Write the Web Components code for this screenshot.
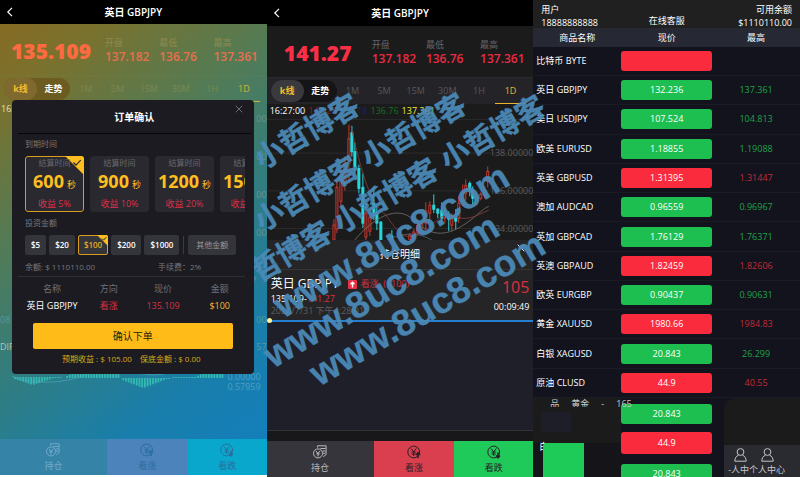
<!DOCTYPE html>
<html lang="zh-CN">
<head>
<meta charset="utf-8">
<title>英日 GBPJPY</title>
<style>
html,body{margin:0;background:#fff}
body{font-family:"Open Sans","Noto Sans CJK SC",sans-serif;font-size:9px;line-height:12px;color:#fff}
main{position:relative;display:grid;grid-template-columns:1fr 1fr 1fr;min-height:100vh;overflow:hidden}
.glow{
  --page:linear-gradient(142deg,#8a6920 0%,#78722f 16%,#537b55 36%,#337d7c 55%,#197eab 78%,#127fc0 100%);
  --big:#ff6a40;--value:#e96f4c;--label:#8f8a50;--muted:#7f8750;--pill:#80692e;--pill2:#6d5c20;--bar:transparent;
  --active:#d0b430;--edge:#7d8a5033;--headline:24px;
  --c1:#3683a8;--c2:#4b83ba;--c3:#0aa7cd;--navink:#73aaca;--navdark:#2b6e9f;
  margin-bottom:2px}
.dark{
  --page:#1b1b1c;--big:#fa2f46;--value:#e92b42;--label:#66666a;--muted:#56575c;--pill:#39393e;--pill2:#151518;--bar:#242428;
  --active:#eab52b;--edge:#29292d;--headline:26px;
  --c1:#35353b;--c2:#d93f4f;--c3:#1fca5b;--navink:#b9b9be;--navdark:#2b2025}
</style>
</head>
<body>
<main>
  <phone-screen class="glow">
    <app-header>英日 GBPJPY</app-header>
    <quote-bar price="135.109"></quote-bar>
    <period-tabs></period-tabs>
    <macd-chart></macd-chart>
    <trade-nav></trade-nav>
    <order-dialog slot="overlay"></order-dialog>
  </phone-screen>
  <phone-screen class="dark">
    <app-header>英日 GBPJPY</app-header>
    <quote-bar price="141.27"></quote-bar>
    <period-tabs></period-tabs>
    <candle-chart></candle-chart>
    <position-sheet></position-sheet>
    <trade-nav></trade-nav>
  </phone-screen>
  <market-screen></market-screen>
  <site-watermark></site-watermark>
</main>
<script>
const define = (name, html) => {
  const t = document.createElement('template');
  t.innerHTML = `<style>:host,*{box-sizing:border-box}button{font:inherit;color:inherit;background:none;border:0;padding:0;margin:0}</style>` + html;
  customElements.define(name, class extends HTMLElement {
    constructor(){
      super();
      this.attachShadow({mode:'open'}).append(t.content.cloneNode(true));
    }
    connectedCallback(){
      this.shadowRoot.querySelectorAll('[data-attr]').forEach(e => e.textContent = this.getAttribute(e.dataset.attr));
    }
  });
};

define('phone-screen', `<style>
:host{display:flex;flex-direction:column;position:relative;background:var(--page);min-width:0}
</style><slot></slot><slot name="overlay"></slot>`);

define('app-header', `<style>
:host{display:grid;grid-template-columns:20px 1fr 20px;align-items:center;height:var(--headline);background:#000}
h1{margin:0;font-size:10px;line-height:16px;font-weight:600;text-align:center}
button{display:grid;place-items:center;height:100%}
</style>
<button aria-label="返回"><svg width="8" height="10" viewBox="0 0 8 10" fill="none" stroke="#fff" stroke-width="1.2"><path d="M6 .8 1.8 5 6 9.2"/></svg></button>
<h1><slot></slot></h1>`);

define('quote-bar', `<style>
:host{display:grid;grid-template-columns:98px 1fr 1fr 1fr;align-items:center;flex:0 0 52px;padding:2px 4px 0 2px;border-bottom:1px solid var(--edge)}
strong{font-size:21px;line-height:28px;font-weight:800;color:var(--big);text-align:center}
dl{margin:0;padding-left:5px}
dt{color:var(--label);line-height:13px}
dd{margin:0;font-size:12px;line-height:16px;font-weight:600;color:var(--value)}
</style>
<strong data-attr="price"></strong>
<dl><dt>开盘</dt><dd>137.182</dd></dl><dl><dt>最低</dt><dd>136.76</dd></dl><dl><dt>最高</dt><dd>137.361</dd></dl>`);

define('period-tabs', `<style>
:host{display:flex;flex:0 0 26px;padding:0 7px 0 4px;background:var(--bar);color:var(--muted);align-items:stretch}
.mode{display:flex;align-self:center;background:var(--pill2);border-radius:12px;color:#fff;height:22px;font-weight:700}
.mode button{width:33px;border-radius:11px}
.mode .on{background:var(--pill);color:#f5be2c}
.periods{display:grid;grid-template-columns:repeat(6,1fr);flex:1}
.periods .on{color:var(--active);border-bottom:1px solid var(--active)}
</style>
<div class="mode"><button class="on">k线</button><button>走势</button></div>
<div class="periods"><button>1M</button><button>5M</button><button>15M</button><button>30M</button><button>1H</button><button class="on">1D</button></div>`);

const coin = (extra) => `<svg width="14" height="14" viewBox="0 0 14 14" fill="none" stroke="currentColor" stroke-width="1"><circle cx="6.7" cy="7" r="5.9"/><path d="m4 3.5 2.7 3.3 2.6-3.3M6.7 6.8v4M4.6 7h4.2M4.6 9h4.2"/>${extra}</svg>`;
define('trade-nav', `<style>
:host{display:grid;grid-template-columns:107fr 81fr 79fr;flex:0 0 36px;color:var(--navink)}
button{display:flex;flex-direction:column;align-items:center;justify-content:center;line-height:13px;gap:2px;background:var(--c1)}
.up{background:var(--c2);color:var(--navdark)}.down{background:var(--c3);color:var(--navdark)}
</style>
<button><svg width="14" height="14" viewBox="0 0 14 14" fill="none" stroke="currentColor"><circle cx="5" cy="8.4" r="4.5"/><path d="m3 6 2 2.4L7 6M5 8.4v3M3.3 8.8h3.4M4.5 2.5V.8h8.6v8.7l-2.8 2.3M7.5 3.5h5M9.5 6h3M10 8.3h2"/></svg>持仓</button>
<button class="up">${coin('<path d="M11 13V8M9 10l2-2.2 2 2.2" stroke-width="1.6"/>')}看涨</button>
<button class="down">${coin('<path d="M11 7.5v5M9 10.5l2 2.2 2-2.2" stroke-width="1.6"/>')}看跌</button>`);

const bars = (() => {
  let s = '';
  const put = (x, y, h) => s += `<rect x="${x}" y="${y}" width="1.8" height="${h}"/>`;
  for (let x = 14; x < 60; x += 2.7) put(x, 6, Math.max(1, 8 - Math.abs(x - 32) / 3));
  for (let x = 66; x < 118; x += 2.7) { const h = Math.min(14, 2 + (x - 66) / 2); put(x, 7 - h, h); }
  for (let x = 122; x < 168; x += 2.7) put(x, 7, Math.max(1, 10 - Math.abs(x - 142) / 2.6));
  for (let x = 172; x < 194; x += 2.7) put(x, 6, 1);
  for (let x = 194; x < 221; x += 2.7) { const h = Math.min(13, 1 + (x - 194) / 2); put(x, 7 - h, h); }
  return s;
})();
define('macd-chart', `<style>
:host{display:flex;flex-direction:column;flex:1;color:#6b938b;overflow:hidden}
.top{display:flex;color:#e4e0bd;padding:1px 0 0 1px}
.axis{display:flex;flex-direction:column;align-items:flex-end;gap:26px;margin-top:-2px}
.low{display:flex;justify-content:space-between;color:#5797a2;margin-bottom:15px}
.dif{color:#a6c8bd}
.spacer{flex:1}
.low.last{margin-bottom:10px}
.wave{display:grid;grid-template-columns:1fr;margin-bottom:46px}
.wave svg{grid-area:1/1;width:100%;height:30px}
.num{grid-area:1/1;justify-self:end;display:flex;flex-direction:column;padding:9px 6px 0 0;line-height:10px;color:#4ca0c4}
</style>
<div class="top">16:</div>
<div class="axis"><span>00</span><span>00</span><span>00</span><span>00</span></div>
<div class="spacer"></div>
<div class="low"><span>08</span><span>00</span></div>
<div class="low last"><span class="dif">DIF</span><span>57</span></div>
<div class="wave"><svg viewBox="0 -8 266 30" preserveAspectRatio="none"><g fill="#32b9b0">${bars}</g><g fill="none" stroke="#4aa6bd" stroke-width=".7"><path d="M12 5c20 9 50 7 67 1 20-7 40-10 60-4 15 4 28 1 35-3"/></g></svg><div class="num"><span>0.00000</span><span>0.57959</span></div></div>`);

define('order-dialog', `<style>
:host{position:absolute;z-index:2;left:12px;right:13px;top:100px;display:block;background:#1b1b21;border-radius:4px;padding:0 9px 9px 6px}
header{display:grid;grid-template-columns:24px 1fr 24px;align-items:center;height:34px;margin-right:-6px;border-bottom:1px solid #08080b}
h2{grid-column:2;margin:0;font-size:10px;font-weight:600;text-align:center;line-height:16px}
.close{display:grid;place-items:center;align-self:start;height:18px}
h3{margin:0;padding-left:7px;font-size:8px;line-height:12px;font-weight:400;color:#77777b}
header + h3{padding-top:4px}
.terms{display:flex;gap:6px;margin:6px 0 5px 7px;overflow:hidden;color:#ffbe1f}
.terms button{position:relative;flex:0 0 59px;height:56px;background:#29292f;border:1px solid #29292f;border-radius:3px;display:flex;flex-direction:column;align-items:center;justify-content:center}
.terms small{position:relative;font-size:8px;line-height:12px;color:#68686d}
.terms b{font-size:18px;line-height:24px;font-weight:700;white-space:nowrap}
.terms i{font-style:normal;font-size:9px;font-weight:400;margin-left:3px}
.terms em{font-style:normal;font-size:9px;line-height:14px;color:#dd304a}
.terms .on,.sums .on{border-color:#d99c20}
.tick{position:absolute;right:-1px;top:-1px}
.sums{display:flex;margin:6px 0 0 7px;gap:3px;align-items:center;font-size:8px;font-weight:600}
.sums button{position:relative;height:20px;padding:0 5px;background:#34343b;border:1px solid #34343b;border-radius:2px}
.sums .on{color:#e5aa25}
.sums span{width:1px;height:18px;background:#3b3b42;margin:0 1px}
.sums .other{color:#97979c;font-weight:400;padding:0 7px}
.info{display:grid;grid-template-columns:133px 1fr;padding:6px 0 3px 7px;color:#77777b;line-height:12px;border-bottom:1px solid #2e2e34;font-size:8px}
table{width:100%;border-collapse:collapse;table-layout:fixed;text-align:center;margin-top:3px}
th,td{padding:0;height:17px;font-weight:400;white-space:nowrap}
th{color:#707074}
.red{color:#d93045}.gold{color:#f4bd32}
.submit{display:block;width:calc(100% - 27px);height:26px;margin:9px auto 0 15px;border-radius:2px;background:#ffbb17;color:#2c260f;font-size:10px}
p{margin:4px 0 0;text-align:center;color:#dba91a;font-size:8px;line-height:12px}
p span+span{margin-left:8px}
</style>
<header><h2>订单确认</h2><button class="close" aria-label="关闭"><svg width="8" height="8" viewBox="0 0 8 8" stroke="#77777b" stroke-width=".9"><path d="m.7.7 6.6 6.6M7.3.7.7 7.3"/></svg></button></header>
<h3>到期时间</h3>
<div class="terms">
<button class="on"><svg class="tick" width="19" height="19" viewBox="0 0 19 19"><path d="M0 0h16q3 0 3 3v16z" fill="#ffbe1f"/><path d="m8.5 6.5 2.5 2.7 4.7-5" fill="none" stroke="#29292f" stroke-width="1.2"/></svg><small>结算时间</small><b>600<i>秒</i></b><em>收益 5%</em></button>
<button><small>结算时间</small><b>900<i>秒</i></b><em>收益 10%</em></button>
<button><small>结算时间</small><b>1200<i>秒</i></b><em>收益 20%</em></button>
<button><small>结算时间</small><b>1500<i>秒</i></b><em>收益 30%</em></button>
</div>
<h3>投资金额</h3>
<div class="sums"><button>$5</button><button>$20</button><button class="on">$100<svg class="tick" width="11" height="11" viewBox="0 0 11 11"><path d="M0 0h9q2 0 2 2v9z" fill="#ffbe1f"/><path d="m5 3.5 1.5 1.7 2.8-3" fill="none" stroke="#29292f"/></svg></button><button>$200</button><button>$1000</button><span></span><button class="other">其他金额</button></div>
<div class="info"><span>余额: $ 1110110.00</span><span>手续费：2%</span></div>
<table><colgroup><col style="width:30%"><col style="width:20%"><col style="width:28%"><col style="width:22%"></colgroup>
<tr><th>名称</th><th>方向</th><th>现价</th><th>金额</th></tr>
<tr><td>英日 GBPJPY</td><td class="red">看涨</td><td class="red">135.109</td><td class="gold">$100</td></tr></table>
<button class="submit">确认下单</button>
<p><span>预期收益 : $ 105.00</span><span>保底金额 : $ 0.00</span></p>`);

/* x, wick top, wick bottom, body top, body bottom, rising */
const candles = [[67,116,137,122,137,1],[70,78,130,84,126,1],[74,66,103,74,98,1],[78,53,87,60,80,1],[82,21,80,35,60,1],
[85,22,53,29,48,0],[88,39,70,48,63,0],[92,61,90,65,85,0],[96,70,125,84,120,0],[99,103,137,110,134,1],[103,110,133,114,128,1],
[107,83,117,100,112,0],[110,103,127,110,120,0],[114,118,137,119,137,0],[125,127,137,133,137,0],[143,130,137,132,137,1],[147,126,137,129,135,1],
[151,116,133,122,130,1],[155,118,127,120,125,1],[159,99,127,108,120,1],[163,98,117,102,110,1],[167,91,110,102,106,0],[171,105,115,106,110,0],
[175,99,121,107,115,0],[178,105,120,110,115,1],[182,108,128,111,116,0],[185,110,128,113,122,1],[189,106,126,114,118,0],[192,93,120,100,115,1],
[196,81,103,89,98,1],[199,76,97,82,90,1],[203,78,93,80,87,0],[206,83,101,87,95,0],[210,90,102,93,98,1],[214,89,97,91,95,1],[218,83,95,87,92,1],[221,63,84,68,78,1]];
const candleSvg = candles.map(([x,a,b,c,d,r]) => `<g ${r ? 'stroke="#c8382f" fill="#1b1b1c"' : 'stroke="#28d8dc" fill="#28d8dc"'}><path d="M${x} ${a}V${b}"/><rect x="${x-1}" y="${c}" width="2" height="${d-c}"/></g>`).join('');
define('candle-chart', `<style>
:host{display:grid;flex:0 0 136px;overflow:hidden}
svg,.over{grid-area:1/1;width:100%;height:100%}
.over{display:grid;grid-template-rows:17px 1fr;color:#fff}
.legend{display:flex;gap:3px;padding:1px 3px;line-height:12px}
.axis{display:flex;flex-direction:column;align-items:flex-end;gap:26px;color:#5c5c5f;padding-top:26px}
</style>
<svg viewBox="0 0 267 137" preserveAspectRatio="none"><g stroke="#2b2b2d"><path d="M0 15.5h267M0 49.5h267M0 87.5h267M0 125.5h267"/></g>
<g stroke-width="1">${candleSvg}</g>
<g fill="none" stroke-width=".8"><path d="M88 137C105 116 130 100 147 117c18 18 33 15 48 6 12-7 20-17 27-20" stroke="#77706c"/><path d="M84 22c9 40 18 75 31 86 10 9 17 29 31 25 22-7 25-25 40-20s20 1 36-6" stroke="#873e38"/><path d="M120 137c20-8 30-8 45 0" stroke="#566579"/></g></svg>
<div class="over"><div class="legend"><span>16:27:00</span><span style="color:#8c1d25">141.27</span><span style="color:#1b1f74">137.18</span><span style="color:#167022">136.76</span><span style="color:#f1f13a">137.361</span></div>
<div class="axis"><span>138.00000</span><span>136.00000</span><span>134.00000</span></div></div>`);

define('position-sheet', `<style>
:host{display:flex;flex-direction:column;flex:1;background:#1e1f28}
.card{background:#252527}
header{display:grid;grid-template-columns:24px 1fr 24px;height:30px;border-bottom:1px solid #343436}
h2{grid-column:2;margin:0;font-size:10px;line-height:28px;font-weight:400;text-align:center}
header button{align-self:start;height:16px;display:grid;place-items:center}
.item{display:flex;justify-content:space-between;padding:5px 4px 2px;height:50px}
.name{display:flex;align-items:center;gap:9px;line-height:18px;font-size:12px}
.side{display:flex;align-items:center;gap:4px;color:#cf3043;font-size:9px}
.left{line-height:12px}
.muted{color:#5d5d60}.red{color:#dc2e43}
.right{text-align:right}
.right b{display:block;font-size:16px;line-height:24px;font-weight:400;color:#dc2e43;margin-bottom:2px}
progress{display:block;appearance:none;width:100%;height:2px;border:0;background:#277fd0}
progress::-webkit-progress-bar{background:#277fd0}
.track{position:relative}
.track i{position:absolute;left:0;top:-2px;width:5px;height:5px;border-radius:50%;background:#fbf49b}
.fill{flex:1;border-bottom:1px solid #333338}
.foot{height:10px;background:#18181a}
</style>
<div class="card"><header><h2>持仓明细</h2><button aria-label="关闭"><svg width="8" height="8" viewBox="0 0 8 8" stroke="#fff" stroke-width=".9"><path d="m.7.7 6.6 6.6M7.3.7.7 7.3"/></svg></button></header>
<div class="item"><div class="left"><div class="name">英日 GBPJPY<span class="side"><svg width="9" height="9" viewBox="0 0 9 9"><rect width="9" height="9" rx="1" fill="#e92f46"/><path d="M4.5 7.5v-5M2.5 4.3l2-2 2 2" fill="none" stroke="#fff" stroke-width="1.4"/></svg>看涨&nbsp; ($100)</span></div>
<div>135.109-<span class="red">141.27</span></div><div class="muted">2020/7/31 下午4:28:01</div></div>
<div class="right"><b>105</b><span>00:09:49</span></div></div></div>
<div class="track"><progress value="0" max="1" aria-label="持仓进度"></progress><i></i></div>
<div class="fill"></div><div class="foot"></div>`);

const quotes = [['比特币 BYTE','','','r'],['英日 GBPJPY','132.236','137.361','g'],['美日 USDJPY','107.524','104.813','g'],['欧美 EURUSD','1.18855','1.19088','g'],
['英美 GBPUSD','1.31395','1.31447','r'],['澳加 AUDCAD','0.96559','0.96967','g'],['英加 GBPCAD','1.76129','1.76371','g'],['英澳 GBPAUD','1.82459','1.82606','r'],
['欧英 EURGBP','0.90437','0.90631','g'],['黄金 XAUUSD','1980.66','1984.83','r'],['白银 XAGUSD','20.843','26.299','g'],['原油 CLUSD','44.9','40.55','r']];
const person = `<svg width="13" height="14" viewBox="0 0 13 14" fill="none" stroke="#c4c4c9" stroke-width="1"><circle cx="6.5" cy="4" r="3.4"/><path d="M4.4 7.2C2 8.2 1 10 .8 13.2h11.4C12 10 11 8.2 8.6 7.2"/></svg>`;
define('market-screen', `<style>
:host{display:grid;grid-template-rows:28px 1fr 79px;background:#12131c;min-width:0;overflow:hidden}
header{display:grid;grid-template-columns:1fr auto 1fr;background:#202021;padding:3px 8px 0;line-height:13px}
header p{margin:0}
header a{color:inherit;text-decoration:none;align-self:end;line-height:15px;padding-bottom:1px}
header .bal{text-align:right}
table{width:100%;height:100%;border-collapse:collapse;table-layout:fixed;font-size:9px}
th{height:19px;padding:0;background:#262833;font-weight:400}
td{padding:0;text-align:center;border-bottom:1px solid #1a1b24;line-height:12px}
td:first-child{text-align:left;padding-left:3px}
.price{display:block;width:100%;height:20px;border-radius:3px;color:#fff}
.g .price,.price.g{background:#1dbf50}.r .price,.price.r{background:#f92b3c}
.g .hi{color:#20a34a}.r .hi{color:#c02b3a}
.tail{position:relative;display:grid;grid-template-columns:1fr 91px 1fr;overflow:hidden}
.stack{display:grid;grid-template-rows:20px 24px 20px;row-gap:8px;padding-top:6px}
.stack .mid{height:22px}
.left{position:relative;background:linear-gradient(#1b1b1c 0 45px,#151519 45px)}
.left .ghost{position:absolute;left:8px;top:14px;width:30px;height:20px;background:#1d1e28}
.left .green{position:absolute;left:10px;top:45px;width:41px;height:34px;background:#1ecb58;border-radius:3px 0 0 0}
.left .char{position:absolute;left:6px;top:43px}
.strip{position:absolute;left:17px;top:0;height:9px;overflow:hidden;display:flex;gap:12px;line-height:11px;color:#ccccca}
.user{background:#1b1b1c;margin-left:12px;border-radius:12px 0 0 0;overflow:hidden}
.user nav{margin-top:47px;height:32px;background:#2a2a31;display:grid;align-content:start;justify-items:start;padding-top:3px}
.user .icons{display:flex;gap:14px;padding-left:10px;height:15px}
.user nav span{white-space:nowrap;line-height:13px;color:#c8c8cc;padding-left:4px}
.user nav a{color:inherit;text-decoration:none}
</style>
<header><p>用户<br>18888888888</p><a href="#service">在线客服</a><p class="bal">可用余额<br>$1110110.00</p></header>
<table><colgroup><col><col style="width:91px"><col></colgroup><thead><tr><th>商品名称</th><th>现价</th><th>最高</th></tr></thead><tbody>
${quotes.map(([n,p,h,c]) => `<tr class="${c}"><td>${n}</td><td><button class="price" aria-label="${n} 现价">${p}</button></td><td class="hi">${h}</td></tr>`).join('')}
</tbody></table>
<div class="tail"><div class="left"><i class="ghost"></i><span class="char">白</span><i class="green"></i></div>
<div class="stack"><button class="price g">20.843</button><button class="price r mid">44.9</button><button class="price g">20.843</button></div>
<div class="user"><nav><div class="icons">${person}${person}</div><span><a href="#me">-人中</a><a href="#me">个人中心</a></span></nav></div>
<div class="strip"><span>品</span><span>黄金</span><span>-</span><span>165</span></div></div>`);

define('site-watermark', `<style>
:host{position:absolute;inset:0;z-index:1;pointer-events:none}
svg{display:block;width:100%;height:100%}
text{fill:#4b8ab8;stroke:#4b8ab8;stroke-width:.5;font-weight:700;font-size:29px;font-family:"Liberation Sans","Noto Sans CJK SC",sans-serif;opacity:.94}
.url{font-size:37px;stroke-width:.3}
</style>
<svg viewBox="0 0 800 477" preserveAspectRatio="xMidYMin meet">
<text transform="translate(262 170) rotate(-30.5)">小哲博客</text>
<text transform="translate(262 232) rotate(-30.5)">小哲博客 小哲博客</text>
<text transform="translate(234 297) rotate(-30.5)">小哲博客 小哲博客 小哲博客</text>
<text class="url" transform="translate(283 319) rotate(-30.5)">www.8uc8.com</text>
<text class="url" transform="translate(273 369) rotate(-30.5)">www.8uc8.com</text>
<text class="url" transform="translate(319 387) rotate(-30.5)">www.8uc8.com</text>
</svg>`);
</script>
</body>
</html>
